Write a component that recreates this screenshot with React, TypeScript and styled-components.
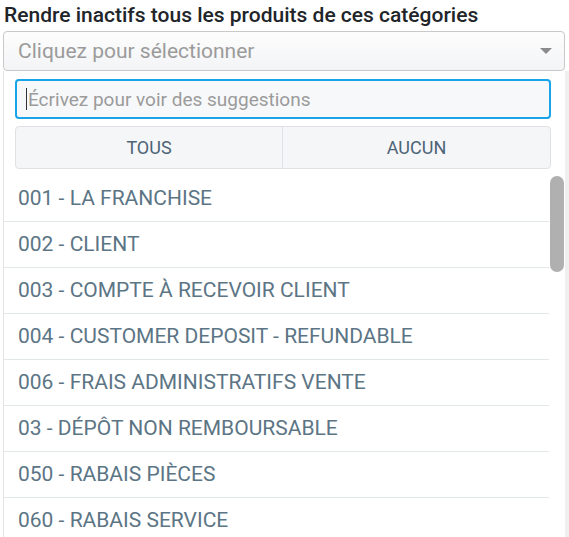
import React from "react";
import styled, { createGlobalStyle } from "styled-components";

const Global = createGlobalStyle`
  html, body {
    margin: 0;
    padding: 0;
    background: #ffffff;
    font-family: Roboto, "Liberation Sans", sans-serif;
  }
  * { box-sizing: border-box; }
`;

const Page = styled.div`
  width: 569px;
  height: 537px;
  overflow: hidden;
  padding: 0 4px 0 3px;
`;

const Label = styled.div`
  padding: 3px 0 0 1px;
  height: 31px;
  font-size: 21px;
  line-height: 25px;
  font-weight: 500;
  color: #212529;
  white-space: nowrap;
`;

const Select = styled.div`
  height: 40px;
  border: 1px solid #c9c9c9;
  border-radius: 4px;
  background: linear-gradient(#fdfdfd, #f3f4f6);
  display: flex;
  align-items: center;
  justify-content: space-between;
  padding: 0 12px 0 14px;
`;

const Placeholder = styled.span`
  font-size: 21px;
  color: #9b9b9b;
`;

const Caret = styled.span`
  width: 0;
  height: 0;
  border-left: 6px solid transparent;
  border-right: 6px solid transparent;
  border-top: 6px solid #8a8a8a;
`;

const Panel = styled.div`
  position: relative;
  margin-right: -4px;
  border-left: 1px solid #e4e4e4;
  border-right: 4px solid #efefef;
  background: #fff;
  height: 470px;
`;

const Header = styled.div`
  padding: 8px 14px 0 11px;
  display: flex;
  flex-direction: column;
  gap: 7px;
`;

const Search = styled.div`
  height: 40px;
  border: 2px solid #17a4e9;
  border-radius: 4px;
  background: #f7f8fa;
  display: flex;
  align-items: center;
  padding-left: 9px;
  font-size: 19px;
  color: #9b9b9b;
`;

const Cursor = styled.span`
  width: 1px;
  height: 22px;
  background: #333;
  margin-right: 1px;
`;

const Buttons = styled.div`
  display: grid;
  grid-template-columns: 267px 1fr;
  height: 43px;
  border: 1px solid #dfe1e4;
  border-radius: 4px;
  background: #f5f6f8;
`;

const Btn = styled.div<{ $divider?: boolean }>`
  display: flex;
  align-items: center;
  justify-content: center;
  font-size: 18px;
  color: #4d6475;
  border-right: ${({ $divider }) => ($divider ? "1px solid #dfe1e4" : "none")};
`;

const List = styled.div`
  margin-top: 7px;
  width: 545px;
`;

const Item = styled.div`
  height: 46px;
  padding: 0 0 1px 14px;
  display: flex;
  align-items: center;
  font-size: 21px;
  color: #5c7585;
  border-bottom: 1px solid #e2e8ea;
  white-space: nowrap;
`;

const Thumb = styled.div`
  position: absolute;
  top: 105px;
  right: 1px;
  width: 14px;
  height: 96px;
  border-radius: 7px;
  background: #b0b0b0;
`;

const items = [
  "001 - LA FRANCHISE",
  "002 - CLIENT",
  "003 - COMPTE À RECEVOIR CLIENT",
  "004 - CUSTOMER DEPOSIT - REFUNDABLE",
  "006 - FRAIS ADMINISTRATIFS VENTE",
  "03 - DÉPÔT NON REMBOURSABLE",
  "050 - RABAIS PIÈCES",
  "060 - RABAIS SERVICE",
];

export default function App() {
  return (
    <Page>
      <Global />
      <Label>Rendre inactifs tous les produits de ces catégories</Label>
      <Select>
        <Placeholder>Cliquez pour sélectionner</Placeholder>
        <Caret />
      </Select>
      <Panel>
        <Header>
          <Search>
            <Cursor />
            Écrivez pour voir des suggestions
          </Search>
          <Buttons>
            <Btn $divider>TOUS</Btn>
            <Btn>AUCUN</Btn>
          </Buttons>
        </Header>
        <List>
          {items.map((t) => (
            <Item key={t}>{t}</Item>
          ))}
        </List>
        <Thumb />
      </Panel>
    </Page>
  );
}
